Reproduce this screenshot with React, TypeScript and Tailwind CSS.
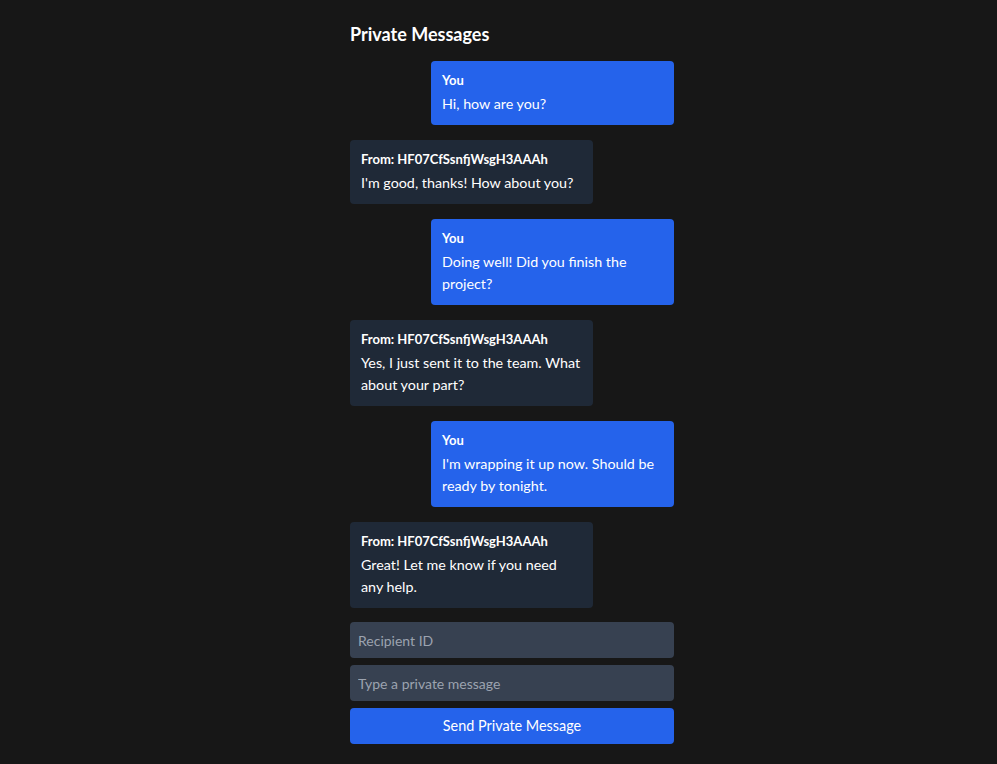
import React from "react";

type Msg = { mine: boolean; from: string; text: string };

const msgs: Msg[] = [
  { mine: true, from: "You", text: "Hi, how are you?" },
  { mine: false, from: "From: HF07CfSsnfjWsgH3AAAh", text: "I'm good, thanks! How about you?" },
  { mine: true, from: "You", text: "Doing well! Did you finish the project?" },
  { mine: false, from: "From: HF07CfSsnfjWsgH3AAAh", text: "Yes, I just sent it to the team. What about your part?" },
  { mine: true, from: "You", text: "I'm wrapping it up now. Should be ready by tonight." },
  { mine: false, from: "From: HF07CfSsnfjWsgH3AAAh", text: "Great! Let me know if you need any help." },
];

export default function App() {
  return (
    <div
      className="min-h-[764px] w-full bg-[#171717] text-white"
      style={{ fontFamily: "Lato, 'Noto Sans', sans-serif" }}
    >
      <div className="ml-[350px] w-[324px] pt-5">
        <h2 className="mb-[13px] text-[18px] font-bold leading-[28px]">Private Messages</h2>
        <div className="flex flex-col gap-[15px]">
          {msgs.map((m, i) => (
            <div key={i} className={m.mine ? "flex justify-end" : "flex justify-start"}>
              <div
                className={
                  (m.mine ? "bg-[#2563eb]" : "bg-[#1f2937]") +
                  " w-3/4 rounded px-[11px] py-[10px]"
                }
              >
                <div className="mb-1 text-[13px] font-bold leading-[18px]">{m.from}</div>
                <div className="text-[14.3px] leading-[22px]">{m.text}</div>
              </div>
            </div>
          ))}
        </div>
        <div className="mt-[14px] flex flex-col gap-[7px]">
          <input
            placeholder="Recipient ID"
            className="h-9 w-full rounded bg-[#374151] px-2 text-[14px] text-white placeholder:text-[#9ca3af] outline-none"
          />
          <input
            placeholder="Type a private message"
            className="h-9 w-full rounded bg-[#374151] px-2 text-[14px] text-white placeholder:text-[#9ca3af] outline-none"
          />
          <button className="h-9 w-full rounded bg-[#2563eb] text-[14.4px] text-white">
            Send Private Message
          </button>
        </div>
      </div>
    </div>
  );
}
